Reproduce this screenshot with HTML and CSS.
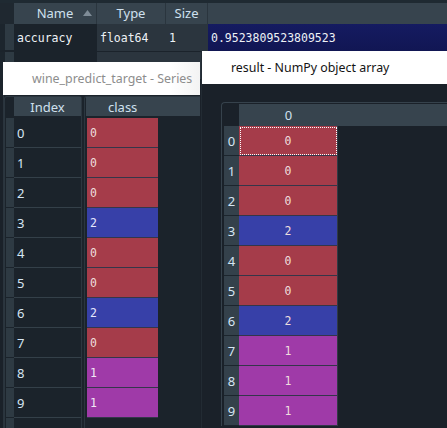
FILE: index.html
```html
<!DOCTYPE html>
<html>
<head>
<meta charset="utf-8">
<link rel="stylesheet" href="styles.css">
</head>
<body>
<div class="desk">
  <section class="ve">
    <div class="ve-row ve-head">
      <div class="c-corner"></div>
      <div class="c-name hcell">Name<svg class="sort" width="9" height="6" viewBox="0 0 9 6"><polygon points="4.5,0 9,6 0,6" fill="#7f8c97"/></svg></div>
      <div class="c-type hcell">Type</div>
      <div class="c-size hcell">Size</div>
      <div class="c-val hcell"></div>
    </div>
    <div class="ve-row ve-data">
      <div class="c-corner vh"></div>
      <div class="c-name dcell mono">accuracy</div>
      <div class="c-type dcell alt mono">float64</div>
      <div class="c-size dcell alt mono">1</div>
      <div class="c-val dcell navy mono">0.9523809523809523</div>
    </div>
    <div class="ve-row ve-data">
      <div class="c-corner vh"></div>
      <div class="c-name dcell mono"></div>
      <div class="c-type dcell alt mono"></div>
      <div class="c-size dcell alt mono"></div>
      <div class="c-val dcell mono"></div>
    </div>
  </section>

  <section class="win lw">
    <div class="title inactive">wine_predict_target - Series</div>
    <div class="lw-body">
      <div class="idx-frame">
        <div class="idx-head"><div class="idx-corner"></div><div class="idx-h">Index</div></div>
        <div class="idx-rows">
          <div class="irow"><div class="vstub"></div><div class="ival">0</div></div>
          <div class="irow"><div class="vstub"></div><div class="ival">1</div></div>
          <div class="irow"><div class="vstub"></div><div class="ival">2</div></div>
          <div class="irow"><div class="vstub"></div><div class="ival">3</div></div>
          <div class="irow"><div class="vstub"></div><div class="ival">4</div></div>
          <div class="irow"><div class="vstub"></div><div class="ival">5</div></div>
          <div class="irow"><div class="vstub"></div><div class="ival">6</div></div>
          <div class="irow"><div class="vstub"></div><div class="ival">7</div></div>
          <div class="irow"><div class="vstub"></div><div class="ival">8</div></div>
          <div class="irow"><div class="vstub"></div><div class="ival">9</div></div>
          <div class="irow"><div class="vstub"></div><div class="ival"></div></div>
        </div>
      </div>
      <div class="dat-frame">
        <div class="dat-h">class</div>
        <div class="dat-rows">
          <div class="lcell red">0</div>
          <div class="lcell red">0</div>
          <div class="lcell red">0</div>
          <div class="lcell blue">2</div>
          <div class="lcell red">0</div>
          <div class="lcell red">0</div>
          <div class="lcell blue">2</div>
          <div class="lcell red">0</div>
          <div class="lcell purple">1</div>
          <div class="lcell purple">1</div>
        </div>
      </div>
    </div>
  </section>

  <section class="win rw">
    <div class="title">result - NumPy object array</div>
    <div class="rw-body">
      <div class="arr-frame">
        <div class="arr-head"><div class="arr-corner"></div><div class="arr-h"><span class="arr-hlabel">0</span></div></div>
        <div class="arow"><div class="rh">0</div><div class="acell red focus">0</div></div>
        <div class="arow"><div class="rh">1</div><div class="acell red">0</div></div>
        <div class="arow"><div class="rh">2</div><div class="acell red">0</div></div>
        <div class="arow"><div class="rh">3</div><div class="acell blue">2</div></div>
        <div class="arow"><div class="rh">4</div><div class="acell red">0</div></div>
        <div class="arow"><div class="rh">5</div><div class="acell red">0</div></div>
        <div class="arow"><div class="rh">6</div><div class="acell blue">2</div></div>
        <div class="arow"><div class="rh">7</div><div class="acell purple">1</div></div>
        <div class="arow"><div class="rh">8</div><div class="acell purple">1</div></div>
        <div class="arow"><div class="rh">9</div><div class="acell purple">1</div></div>
      </div>
    </div>
  </section>
</div>
</body>
</html>
```

FILE: styles.css
```css
* { box-sizing: border-box; }
html, body { margin: 0; padding: 0; }
body {
  width: 447px;
  height: 428px;
  overflow: hidden;
  background: #1a2129;
  font-family: "Noto Sans", "Open Sans", sans-serif;
  font-size: 13px;
}
.desk { position: relative; width: 447px; height: 428px; background: #1a2129; }
.mono { font-family: "DejaVu Sans Mono", "Liberation Mono", monospace; font-size: 11.5px; }

/* variable explorer */
.ve {
  position: absolute; left: 0; top: 0; width: 447px; height: 90px;
  border-top: 3px solid #1f2a32;
  background: #1b232b;
}
.ve-row { display: flex; }
.ve-head { height: 21px; }
.ve-data { height: 28px; border-bottom: 1px solid #1b232b; }
.c-corner { width: 14px; flex: none; background: #1f2830; }
.c-corner.vh { border-left: 5px solid #1c252d; background: #2e3a43; border-bottom: 1px solid #1b232b; }
.c-name { width: 83px; flex: none; }
.c-type { width: 69px; flex: none; }
.c-size { width: 42px; flex: none; }
.c-val { flex: 1; }
.hcell {
  background: #37444e;
  color: #cfe0ee;
  display: flex; align-items: center; justify-content: center;
  border-right: 1px solid #2a353e;
  position: relative;
  line-height: 1;
}
.hcell.c-val { border-right: none; }
.sort { position: absolute; right: 4px; top: 7px; }
.dcell {
  color: #eef2f6;
  display: flex; align-items: center;
  padding-left: 3px;
  background: #1b232b;
}
.dcell.alt { background: #2b353e; }
.dcell.navy { background: linear-gradient(#151b61, #111653); }

/* windows */
.win { position: absolute; }
.title {
  height: 33px;
  background: #ffffff;
  padding-left: 29px;
  display: flex; align-items: center;
  color: #141414;
  font-size: 12.4px;
  white-space: nowrap;
}
.title.inactive { color: #8d8d8d; background: linear-gradient(90deg, #ffffff 85%, #f3f3f3); }

/* left window */
.lw { left: 3px; top: 62px; width: 197px; height: 366px; background: #1b232b; }
.lw-body { display: flex; gap: 2px; padding-top: 1px; height: 333px; border-left: 1px solid #2a343d; }
.idx-frame {
  width: 78px;
  border: 1px solid #2b363f; border-bottom: none;
  border-radius: 3px 3px 0 0;
  padding-left: 1px;
}
.idx-head { display: flex; height: 19px; }
.idx-corner { width: 8px; }
.idx-h { flex: 1; background: #37444e; color: #cfe0ee; display: flex; align-items: center; justify-content: center; }
.idx-rows { margin-top: 2px; }
.irow { display: flex; height: 30px; }
.vstub { width: 8px; background: #2e3a43; border-bottom: 1px solid #1b232b; }
.ival {
  flex: 1; color: #d6e6f4; padding-left: 3px;
  display: flex; align-items: center;
  border-bottom: 1px solid #344049;
  font-size: 13px;
}
.dat-frame {
  flex: 1;
  border-left: 1px solid #2b363f; border-top: 1px solid #2b363f;
  border-radius: 3px 0 0 0;
  padding-left: 1px;
}
.dat-h { height: 19px; background: #37444e; color: #cfe0ee; display: flex; align-items: center; padding-left: 22px; }
.dat-rows { margin-top: 2px; width: 72px; padding-left: 1px; }
.lcell {
  height: 30px;
  border-bottom: 1px solid #34364a;
  display: flex; align-items: center;
  padding-left: 3px;
  color: #eedede;
  font-family: "DejaVu Sans Mono", "Liberation Mono", monospace; font-size: 11.5px;
}
.red { background: #a53c4a; }
.blue { background: #3740a8; color: #e6e8ff; }
.purple { background: #9f3aa8; color: #f2e6f4; }

/* right window */
.rw { left: 201px; top: 51px; width: 246px; height: 377px; background: #1a2129; border-left: 1px solid #222b33; }
.rw-body { padding: 18px 0 0 19px; }
.arr-frame {
  border-left: 1px solid #36424c; border-top: 1px solid #36424c;
  border-radius: 4px 0 0 0;
  padding-top: 1px;
  padding-left: 2px;
}
.arr-head { display: flex; height: 22px; }
.arr-corner { width: 15px; }
.arr-h { flex: 1; background: #37444e; color: #cfe0ee; display: flex; align-items: center; }
.arr-hlabel { width: 99px; text-align: center; }
.arow { display: flex; height: 30px; }
.rh {
  width: 15px; background: #34414b; color: #d6e6f4;
  display: flex; align-items: center; justify-content: center;
  border-bottom: 1px solid #1c252d;
}
.acell {
  width: 99px;
  display: flex; align-items: center; justify-content: center;
  border-bottom: 1px solid #34364a;
  border-right: 1px solid #303a44;
  color: #eedede;
  font-family: "DejaVu Sans Mono", "Liberation Mono", monospace; font-size: 11.5px;
}
.focus { outline: 1px dotted #ffffff; outline-offset: -2px; }
```
